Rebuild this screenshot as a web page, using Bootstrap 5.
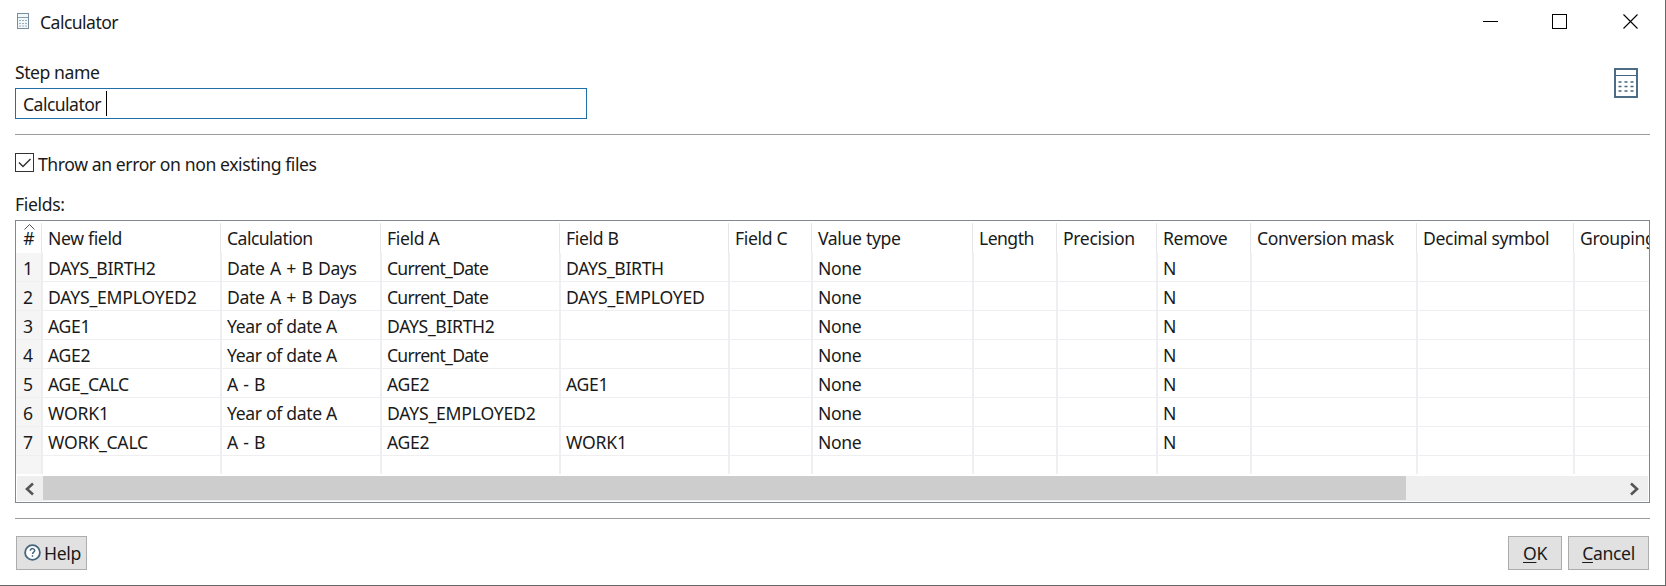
<!DOCTYPE html>
<html lang="en">
<head>
<meta charset="utf-8">
<title>Calculator</title>
<link rel="stylesheet" href="https://cdn.jsdelivr.net/npm/bootstrap@5.3.0/dist/css/bootstrap.min.css">
<script src="https://cdn.jsdelivr.net/npm/bootstrap@5.3.0/dist/js/bootstrap.bundle.min.js"></script>
<style>
body{font-family:"Noto Sans","Open Sans",sans-serif;font-size:17.6px;line-height:24px;color:#1a1a1a;letter-spacing:-.35px;overflow:hidden}
.dialog{width:1666px;height:586px;background:#fff;border-right:1px solid #666;border-bottom:1px solid #666;padding:0 15px}
.titlebar{height:46px;padding:10px 11px 0 2px}
.title-icon{margin:3px 11px 0 0}
.win-btns{gap:54px;padding-top:5px}
.tight{letter-spacing:-.55px}
.tighter{letter-spacing:-.75px}
.loose{letter-spacing:-.22px}
.airy{word-spacing:1.2px}
.head{height:88px;padding-top:14px}
.head .form-control{width:572px;height:31px;margin-top:4px;padding:0 7px;border:1px solid #1f6fa8;border-radius:0;font-size:inherit;color:#1a1a1a}
.head .form-control span{line-height:24px}
.caret{width:1px;height:25px;background:#000;margin-left:5px}
.step-icon{margin:8px 12px 0 0}
.rule{height:1px;background:#9c9c9c}
.check-row{height:57px;padding-top:17px}
.box{width:19px;height:19px;border:1px solid #333;margin-top:1px}
.grid-box{height:283px;border:1px solid #828790;overflow:hidden;margin-top:4px}
.fields{width:1633px;table-layout:fixed;margin:0;border-collapse:separate;border-spacing:0}
.fields>:not(caption)>*>*{font-weight:400;padding:2px 0 0 5px;height:29px;line-height:26px;border:0;border-right:2px solid #efeff3;border-bottom:1px solid #efeff1;white-space:nowrap;background:#fff;color:#1a1a1a;box-shadow:none}
.fields>thead>tr>th{height:32px;line-height:30px;border-bottom:0;border-right:0;background:linear-gradient(#e6e6e8,#e6e6e8) right 1px top 2px/1px 30px no-repeat #fff}
.fields>*>tr>:first-child{padding-left:0;padding-right:1px;text-align:center;letter-spacing:0}
.fields>tbody>tr>td:first-child{background:#f5f5f6;border-right-color:#eee}
.fields>*>tr>:last-child{border-right:0;background:#fff}
.fields>tbody>tr.blank>td{height:18px;line-height:15px;border-bottom:0}
.sort{left:8px;top:3px}
.scroller{height:25px;background:#efefef;margin:2px 1px 0}
.thumb{width:1363px;height:24px;background:#cdcdcd}
.arrow{width:26px;height:25px}
.btn-win{height:34px;border:1px solid #adadad;background:#e1e1e1;border-radius:0;font-size:inherit;line-height:24px;padding:4px 0;letter-spacing:inherit;color:#1a1a1a}
.btn-win:hover{background:#e5f1fb}
u{text-underline-offset:2px;text-decoration-thickness:1px}
</style>
</head>
<body>
<div class="dialog d-flex flex-column">
  <header class="titlebar d-flex justify-content-between align-items-start">
    <div class="d-flex align-items-start">
      <svg class="title-icon" width="12" height="17" viewBox="0 0 12 17"><rect x=".5" y=".5" width="11" height="15" fill="#f2f7fa" stroke="#788d9e"/><path d="M1 4.500h10" stroke="#8aa0b0"/><path d="M2 7.500h8M2 10.500h8M2 13h8" stroke="#9db0bd" stroke-dasharray="2 1"/></svg>
      <span class="tight">Calculator</span>
    </div>
    <div class="win-btns d-flex">
      <svg width="16" height="16" viewBox="0 0 16 16" style="margin-right:-1px"><path d="M0 6.500h15" stroke="#000"/></svg>
      <svg width="16" height="16" viewBox="0 0 16 16" style="margin:-1px 1px 0 0"><rect x=".5" y=".5" width="14" height="14" fill="none" stroke="#000"/></svg>
      <svg width="16" height="16" viewBox="0 0 16 16" style="margin-top:-1px"><path d="M.5.5l14 14M14.500.5l-14 14" stroke="#000" stroke-width="1.100"/></svg>
    </div>
  </header>

  <section class="head d-flex justify-content-between">
    <div>
      <label class="d-block" style="letter-spacing:-.45px">Step name</label>
      <div class="form-control d-flex align-items-center"><span class="tight">Calculator</span><i class="caret"></i></div>
    </div>
    <svg class="step-icon" width="24" height="30" viewBox="0 0 24 30"><rect x="1" y="1" width="22" height="28" fill="#fff" stroke="#456580" stroke-width="1.900"/><path d="M2 7.500h20" stroke="#456580"/><path d="M4.500 14h3m3 0h3m3 0h3M4.500 18.500h3m3 0h3m3 0h3M4.500 23h3m3 0h3m3 0h3" stroke="#456580" stroke-width="1.400"/></svg>
  </section>
  <div class="rule"></div>

  <div class="check-row d-flex">
    <span class="box"><svg class="d-block" width="17" height="17" viewBox="0 0 17 17"><path d="M3 8.500l4 4L14.500 5" fill="none" stroke="#333" stroke-width="1.500"/></svg></span>
    <label style="margin-left:4px;letter-spacing:-.42px">Throw an error on non existing files</label>
  </div>
  <label>Fields:</label>

  <div class="grid-box">
    <table class="table fields">
      <colgroup><col style="width:27px"><col style="width:179px"><col style="width:160px"><col style="width:179px"><col style="width:169px"><col style="width:83px"><col style="width:161px"><col style="width:84px"><col style="width:100px"><col style="width:94px"><col style="width:166px"><col style="width:157px"><col style="width:74px"></colgroup>
      <thead><tr><th class="position-relative"><svg class="sort position-absolute" width="11" height="6" viewBox="0 0 11 6"><path d="M.5 5.500l5-5 5 5" fill="none" stroke="#555"/></svg>#</th><th>New field</th><th class="tight">Calculation</th><th>Field A</th><th>Field B</th><th>Field C</th><th>Value type</th><th class="tight">Length</th><th>Precision</th><th>Remove</th><th>Conversion mask</th><th>Decimal symbol</th><th>Grouping</th></tr></thead>
      <tbody>
        <tr><td>1</td><td>DAYS_BIRTH2</td><td class="airy">Date A + B Days</td><td class="tighter">Current_Date</td><td>DAYS_BIRTH</td><td></td><td>None</td><td></td><td></td><td>N</td><td></td><td></td><td></td></tr>
        <tr><td>2</td><td class="loose">DAYS_EMPLOYED2</td><td class="airy">Date A + B Days</td><td class="tighter">Current_Date</td><td class="loose">DAYS_EMPLOYED</td><td></td><td>None</td><td></td><td></td><td>N</td><td></td><td></td><td></td></tr>
        <tr><td>3</td><td>AGE1</td><td>Year of date A</td><td>DAYS_BIRTH2</td><td></td><td></td><td>None</td><td></td><td></td><td>N</td><td></td><td></td><td></td></tr>
        <tr><td>4</td><td>AGE2</td><td>Year of date A</td><td class="tighter">Current_Date</td><td></td><td></td><td>None</td><td></td><td></td><td>N</td><td></td><td></td><td></td></tr>
        <tr><td>5</td><td>AGE_CALC</td><td class="airy">A - B</td><td>AGE2</td><td>AGE1</td><td></td><td>None</td><td></td><td></td><td>N</td><td></td><td></td><td></td></tr>
        <tr><td>6</td><td class="loose">WORK1</td><td>Year of date A</td><td class="loose">DAYS_EMPLOYED2</td><td></td><td></td><td>None</td><td></td><td></td><td>N</td><td></td><td></td><td></td></tr>
        <tr><td>7</td><td class="loose">WORK_CALC</td><td class="airy">A - B</td><td>AGE2</td><td class="loose">WORK1</td><td></td><td>None</td><td></td><td></td><td>N</td><td></td><td></td><td></td></tr>
        <tr class="blank"><td></td><td></td><td></td><td></td><td></td><td></td><td></td><td></td><td></td><td></td><td></td><td></td><td></td></tr>
      </tbody>
    </table>
    <div class="scroller d-flex">
      <svg class="arrow" viewBox="0 0 26 25"><path d="M16 7.500l-6 5.500 6 5.500" fill="none" stroke="#555" stroke-width="2.600"/></svg>
      <div class="thumb"></div>
      <svg class="arrow ms-auto" viewBox="0 0 26 25"><path d="M9 7.500l6 5.500-6 5.500" fill="none" stroke="#555" stroke-width="2.600"/></svg>
    </div>
  </div>

  <div class="rule" style="margin-top:15px"></div>
  <footer class="d-flex" style="padding:17px 1px 0 1px">
    <button class="btn btn-win d-flex tight" style="width:71px;padding-left:7px"><svg width="17" height="17" viewBox="0 0 17 17" style="margin:3px 3px 0 0"><circle cx="8.500" cy="8.500" r="7.400" fill="#fff" stroke="#456580" stroke-width="1.800"/><path d="M6.300 6.800c0-3 4.600-2.800 4.400 0-.1 1.400-2.200 1.400-2.200 3.200M8.500 11.300v1.500" fill="none" stroke="#456580" stroke-width="1.500"/></svg>Help</button>
    <button class="btn btn-win ms-auto" style="width:54px"><u>O</u>K</button>
    <button class="btn btn-win" style="width:81px;margin-left:6px"><u>C</u>ancel</button>
  </footer>
</div>
</body>
</html>
